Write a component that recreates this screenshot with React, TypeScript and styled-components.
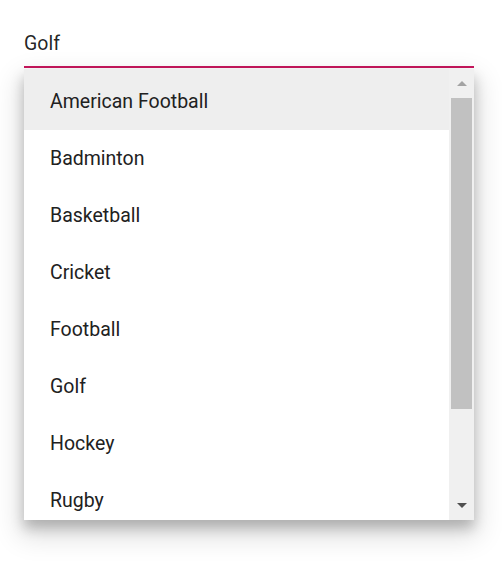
import React from "react";
import styled, { createGlobalStyle } from "styled-components";

const sports = [
  "American Football",
  "Badminton",
  "Basketball",
  "Cricket",
  "Football",
  "Golf",
  "Hockey",
  "Rugby",
];

const GlobalStyle = createGlobalStyle`
  html, body {
    margin: 0;
    padding: 0;
    background: #fff;
    font-family: Roboto, "Noto Sans", sans-serif;
  }
`;

const Page = styled.div`
  padding: 24px 28px 45px 24px;
  width: 450px;
`;

const InputWrap = styled.div`
  display: flex;
  align-items: center;
  height: 38px;
  padding-bottom: 4px;
  border-bottom: 2px solid #c8175d;
  font-size: 19.5px;
  color: rgba(0, 0, 0, 0.87);
`;

const Popup = styled.div`
  display: flex;
  margin-top: 1px;
  height: 451px;
  background: #fff;
  box-shadow: 0 8px 12px rgba(0, 0, 0, 0.22), 0 12px 26px 4px rgba(0, 0, 0, 0.14);
`;

const List = styled.ul`
  flex: 1;
  margin: 0;
  padding: 0;
  list-style: none;
  overflow: hidden;
`;

const Item = styled.li<{ $active?: boolean; $first?: boolean }>`
  height: 56px;
  line-height: 56px;
  padding-left: 26px;
  padding-top: ${(p) => (p.$first ? "5px" : "1px")};
  font-size: 19.5px;
  color: #212121;
  background: ${(p) => (p.$active ? "#eeeeee" : "#fff")};
  white-space: nowrap;
`;

const Scrollbar = styled.div`
  width: 25px;
  display: flex;
  flex-direction: column;
  align-items: center;
  background: #f0f0f0;
`;

const Arrow = styled.div<{ $dir: "up" | "down"; $color: string }>`
  height: 29px;
  width: 100%;
  display: flex;
  justify-content: center;
  align-items: center;
  &::before {
    content: "";
    width: 0;
    height: 0;
    border-left: 5px solid transparent;
    border-right: 5px solid transparent;
    ${(p) =>
      p.$dir === "up"
        ? `border-bottom: 5px solid ${p.$color};`
        : `border-top: 5px solid ${p.$color};`}
  }
`;

const Track = styled.div`
  flex: 1;
  width: 21px;
`;

const Thumb = styled.div`
  height: 311px;
  background: #c1c1c1;
`;

export default function App() {
  return (
    <>
      <GlobalStyle />
      <Page>
        <InputWrap>Golf</InputWrap>
        <Popup>
          <List>
            {sports.map((s, i) => (
              <Item key={s} $active={i === 0} $first={i === 0}>
                {s}
              </Item>
            ))}
          </List>
          <Scrollbar>
            <Arrow $dir="up" $color="#a3a3a3" />
            <Track>
              <Thumb />
            </Track>
            <Arrow $dir="down" $color="#505050" />
          </Scrollbar>
        </Popup>
      </Page>
    </>
  );
}
